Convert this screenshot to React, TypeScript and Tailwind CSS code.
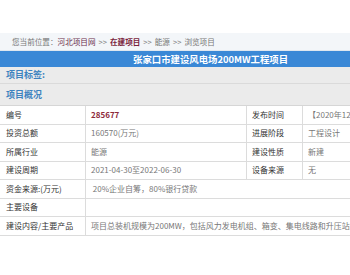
const rows4 = [
    { a: "编号", b: "285677", c: "发布时间", d: "【2020年12月28日】", strong: true },
    { a: "投资总额", b: "160570(万元)", c: "进展阶段", d: "工程设计" },
    { a: "所属行业", b: "能源", c: "建设性质", d: "新建" },
    { a: "建设周期", b: "2021-04-30至2022-06-30", c: "设备来源", d: "无" },
];

const rows2 = [
    { a: "资金来源:(万元)", b: " 20%企业自筹，80%银行贷款" },
    { a: "主要设备", b: "" },
    { a: "建设内容/主要产品", b: "项目总装机规模为200MW，包括风力发电机组、箱变、集电线路和升压站工程等。" },
];

const cell = "h-[18.5px] flex items-center border-b border-r border-[#dcdcdc] whitespace-nowrap overflow-hidden";

export default function App() {
    return (
        <div
            className="w-[350px] h-[275px] bg-white overflow-hidden pt-[33px]"
            style={{ fontFamily: '"Noto Sans CJK SC", "Liberation Sans", sans-serif' }}
        >
            <div className="w-[440px]">
                {/* breadcrumb */}
                <div className="h-[18px] bg-[#f3f6f9] border-b border-[#dfe7ef] flex items-center pl-[12px] text-[7.6px] text-[#777] whitespace-nowrap">
                    <span>您当前位置：</span>
                    <span className="text-[#6b2f4c]">河北项目网</span>
                    <span className="mx-[3px]">&gt;&gt;</span>
                    <span className="text-[#7a1f3d] font-bold">在建项目</span>
                    <span className="mx-[3px]">&gt;&gt;</span>
                    <span>能源</span>
                    <span className="mx-[3px]">&gt;&gt;</span>
                    <span>浏览项目</span>
                </div>

                {/* title bar */}
                <div className="h-[16px] bg-[#3a88d6] flex items-center pl-[133px] text-white text-[9.4px] font-bold whitespace-nowrap">
                    张家口市建设风电场200MW工程项目
                </div>

                <div className="h-[17px] bg-[#ebebeb] border-b border-[#dadada] flex items-center pl-[6px] text-[9px] font-bold text-[#3d82bf]">
                    项目标签:
                </div>
                <div className="h-[22px] bg-[#ebebeb] border-b border-[#d6d6d6] flex items-center pl-[6px] text-[9px] font-bold text-[#3d82bf]">
                    项目概况
                </div>

                <div className="text-[8px]">
                    {rows4.map((r) => (
                        <div key={r.a} className="grid grid-cols-[86px_161px_56px_1fr]">
                            <div className={`${cell} pl-[6px] text-[#333]`}>{r.a}</div>
                            <div
                                className={`${cell} pl-[5px] ${r.strong ? "font-bold text-[#8e2a3a]" : "text-[#777]"}`}
                            >
                                {r.b}
                            </div>
                            <div className={`${cell} pl-[5px] text-[#333]`}>{r.c}</div>
                            <div className={`${cell} pl-[5px] text-[#777]`}>{r.d}</div>
                        </div>
                    ))}
                    {rows2.map((r) => (
                        <div key={r.a} className="grid grid-cols-[86px_1fr]">
                            <div className={`${cell} pl-[6px] text-[#333]`}>{r.a}</div>
                            <div className={`${cell} pl-[5px] text-[#777] whitespace-pre`}>{r.b}</div>
                        </div>
                    ))}
                </div>
            </div>
        </div>
    );
}
